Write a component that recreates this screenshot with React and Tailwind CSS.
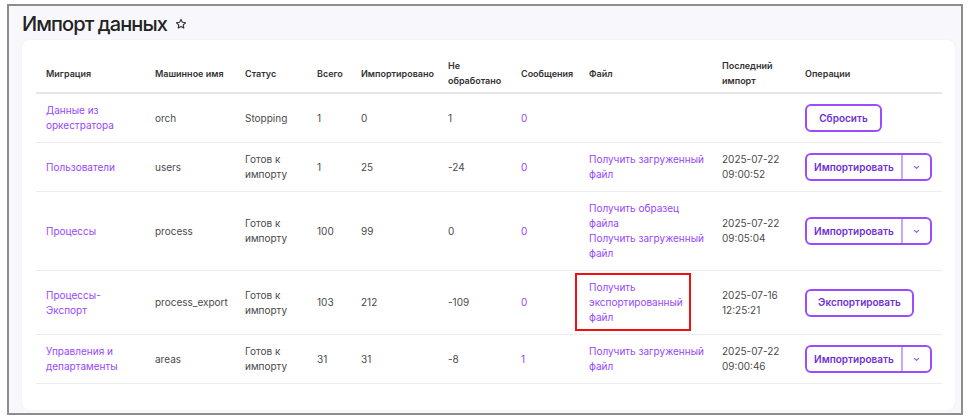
import React from 'react';

const cols = [109, 90, 72, 44, 87, 73, 68, 133, 83, 147];

const headers = ['Миграция', 'Машинное имя', 'Статус', 'Всего', 'Импортировано', 'Не обработано', 'Сообщения', 'Файл', 'Последний импорт', 'Операции'];

const rows = [
    { name: 'Данные из оркестратора', machine: 'orch', status: 'Stopping', total: '1', imported: '0', failed: '1', messages: '0', files: [], last: null, op: 'reset' },
    { name: 'Пользователи', machine: 'users', status: 'Готов к импорту', total: '1', imported: '25', failed: '-24', messages: '0', files: ['Получить загруженный файл'], last: ['2025-07-22', '09:00:52'], op: 'import' },
    { name: 'Процессы', machine: 'process', status: 'Готов к импорту', total: '100', imported: '99', failed: '0', messages: '0', files: ['Получить образец файла', 'Получить загруженный файл'], last: ['2025-07-22', '09:05:04'], op: 'import' },
    { name: 'Процессы-Экспорт', machine: 'process_export', status: 'Готов к импорту', total: '103', imported: '212', failed: '-109', messages: '0', files: ['Получить экспортированный файл'], last: ['2025-07-16', '12:25:21'], op: 'export', marked: true },
    { name: 'Управления и департаменты', machine: 'areas', status: 'Готов к импорту', total: '31', imported: '31', failed: '-8', messages: '1', files: ['Получить загруженный файл'], last: ['2025-07-22', '09:00:46'], op: 'import' },
];

function StarIcon() {
    return (
        <svg width="12" height="12" viewBox="0 0 24 24" fill="none" stroke="#333" strokeWidth="2.2" strokeLinejoin="round">
            <path d="M12 2.8l2.8 5.8 6.3.9-4.6 4.4 1.1 6.3L12 17.2l-5.6 3 1.1-6.3-4.6-4.4 6.3-.9z" />
        </svg>
    );
}

function Operation({ type }) {
    const btn = 'h-[28px] rounded-[6px] border-2 border-[#9a4dff] bg-white text-[10px] font-semibold text-[#6f2fd8]';
    if (type === 'reset') {
        return <button className={`${btn} w-[77px]`}>Сбросить</button>;
    }
    if (type === 'export') {
        return <button className={`${btn} w-[109px]`}>Экспортировать</button>;
    }
    return (
        <div className={`${btn} flex w-[127px] items-stretch`}>
            <span className="flex flex-1 items-center justify-center">Импортировать</span>
            <span className="flex w-[29px] items-center justify-center border-l-2 border-[#c9a6ff]">
                <svg width="7" height="5" viewBox="0 0 8 5" fill="none" stroke="#9a4dff" strokeWidth="1.3" strokeLinecap="round" strokeLinejoin="round">
                    <path d="M1.5 1.2L4 3.6l2.5-2.4" />
                </svg>
            </span>
        </div>
    );
}

export default function App() {
    return (
        <div className="h-[420px] w-[971px] bg-white pl-[7px] pt-[4px]" style={{ fontFamily: 'Inter, "Noto Sans", sans-serif' }}>
            <div className="flex h-[411px] w-[956px] flex-col border-2 border-[#8d8d8d] bg-[#f8f7fc]">
                <div className="flex h-[34px] items-center gap-[8px] pl-[13px] pt-[2px]">
                    <h1 className="text-[20px] font-medium tracking-[-0.9px] text-[#222]">Импорт данных</h1>
                    <StarIcon />
                </div>
                <div className="mr-[6px] ml-[13px] mb-[3px] flex-1 rounded-[8px] bg-white px-[14px] pt-[14px] shadow-[0_0_2px_rgba(0,0,0,0.06)]">
                    <table className="w-[906px] table-fixed border-collapse text-left">
                        <colgroup>
                            {cols.map((w, i) => (
                                <col key={i} style={{ width: w }} />
                            ))}
                        </colgroup>
                        <thead>
                            <tr className="border-b-2 border-[#e6e6e9]">
                                {headers.map((h, i) => (
                                    <th key={i} className="h-[39px] px-[10px] align-middle text-[9px] leading-[15px] font-semibold text-[#333]">
                                        {h}
                                    </th>
                                ))}
                            </tr>
                        </thead>
                        <tbody className="text-[10px] leading-[15px] text-[#4a4a4a]">
                            {rows.map((row, i) => (
                                <tr key={i} className="border-b border-[#ececef]">
                                    <td className="px-[10px] py-[9px] align-middle text-[#9747ff]">{row.name}</td>
                                    <td className="px-[10px] py-[9px] align-middle">{row.machine}</td>
                                    <td className="px-[10px] py-[9px] align-middle">{row.status}</td>
                                    <td className="px-[10px] py-[9px] align-middle">{row.total}</td>
                                    <td className="px-[10px] py-[9px] align-middle">{row.imported}</td>
                                    <td className="px-[10px] py-[9px] align-middle">{row.failed}</td>
                                    <td className="px-[10px] py-[9px] align-middle text-[#9747ff]">{row.messages}</td>
                                    <td className="relative px-[10px] py-[9px] align-middle text-[#9747ff]">
                                        {row.files.map((f, j) => (
                                            <div key={j} className="w-[118px]">{f}</div>
                                        ))}
                                        {row.marked && (
                                            <div className="absolute top-[2px] right-[21px] bottom-[3px] left-[-4px] border-2 border-[#f01010]" />
                                        )}
                                    </td>
                                    <td className="px-[10px] py-[9px] align-middle">
                                        {row.last && (
                                            <>
                                                <div>{row.last[0]}</div>
                                                <div>{row.last[1]}</div>
                                            </>
                                        )}
                                    </td>
                                    <td className="px-[10px] py-[9px] align-middle">
                                        <Operation type={row.op} />
                                    </td>
                                </tr>
                            ))}
                        </tbody>
                    </table>
                </div>
            </div>
        </div>
    );
}
